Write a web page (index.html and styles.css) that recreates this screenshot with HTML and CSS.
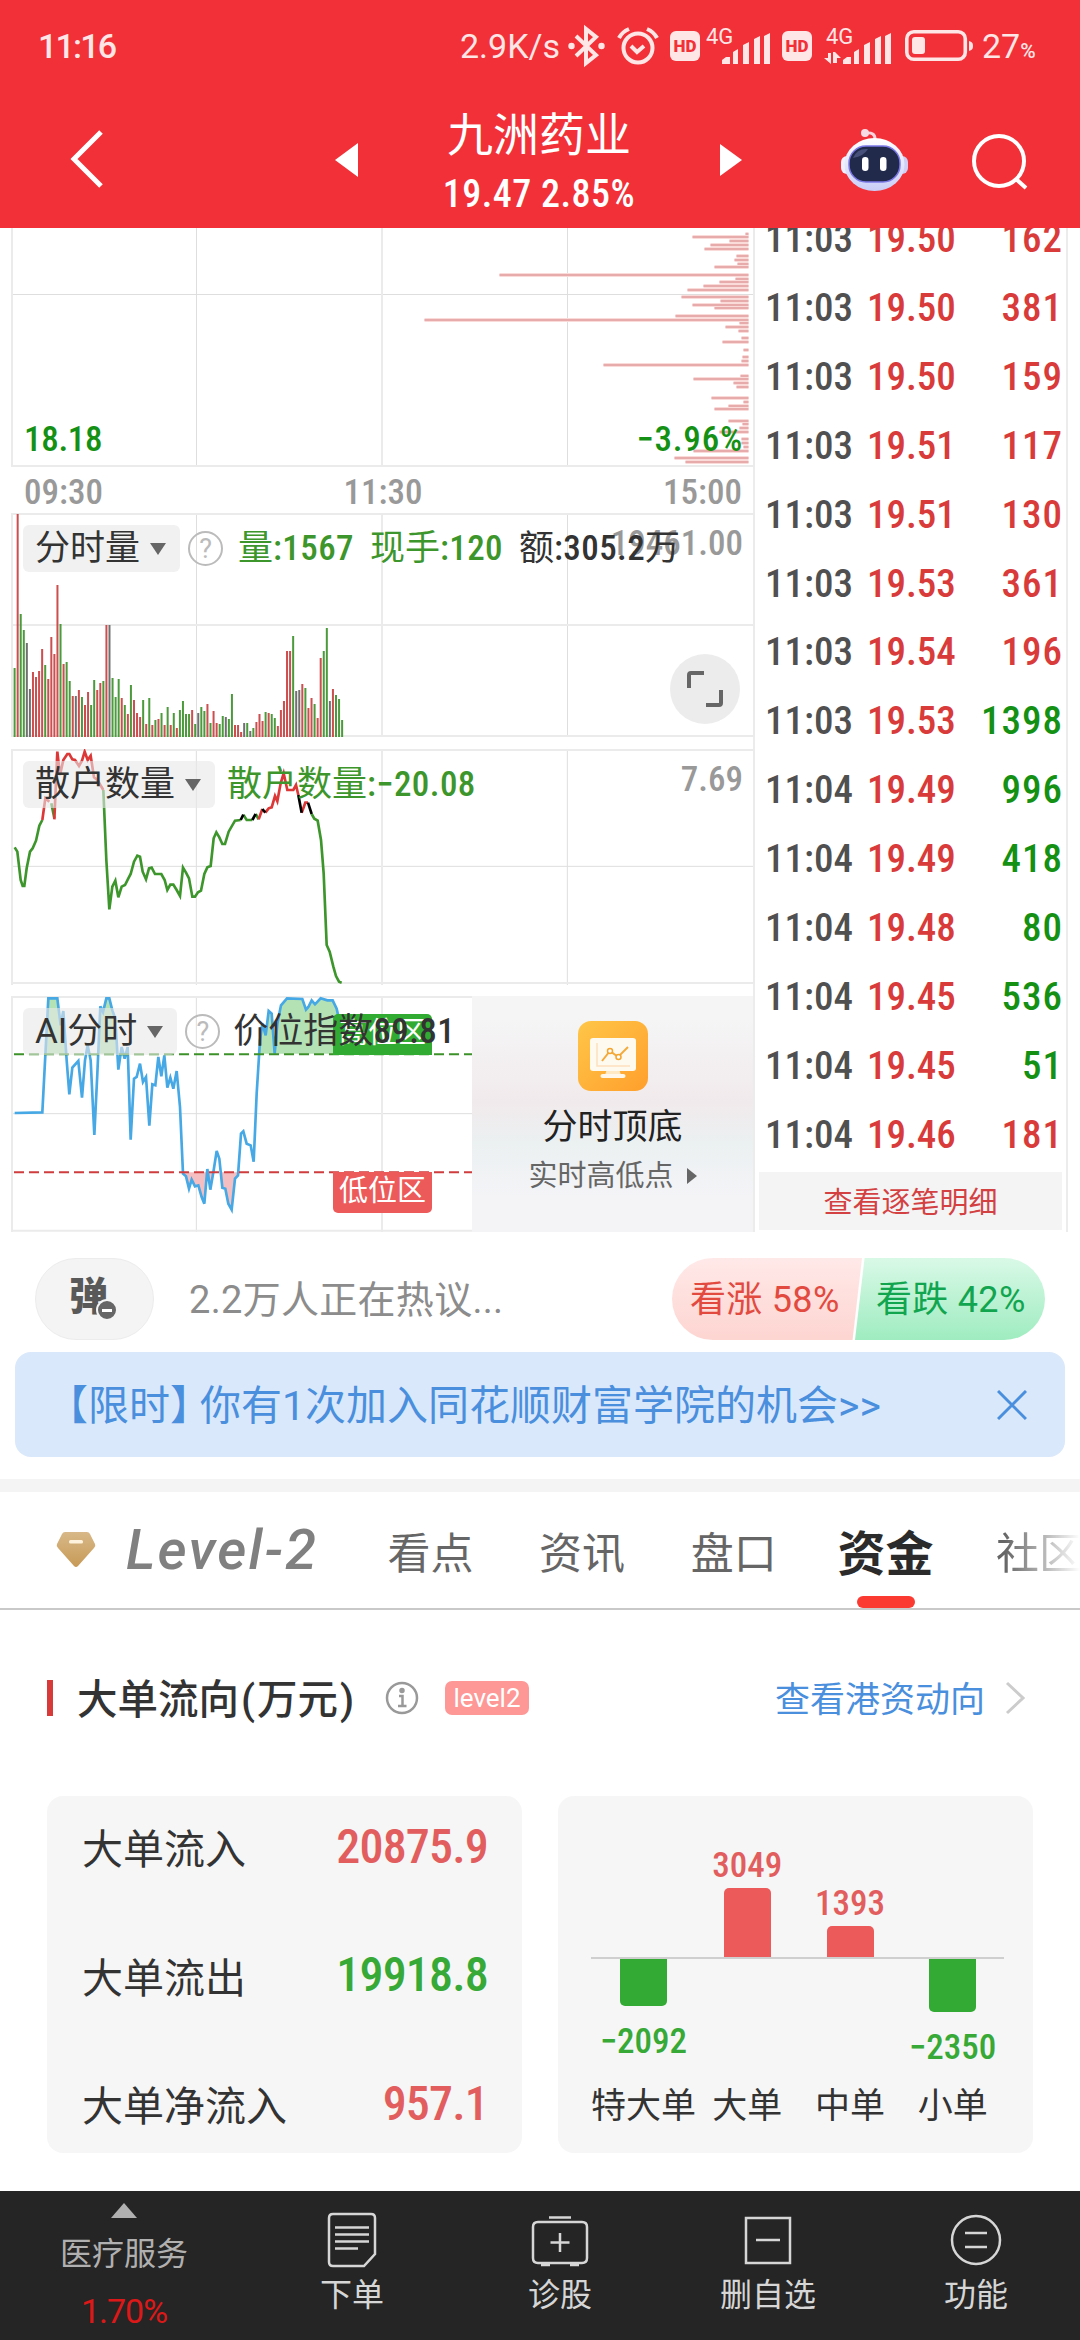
FILE: index.html
```html
<!DOCTYPE html>
<html lang="zh-CN">
<head>
  <meta charset="UTF-8">
  <meta name="viewport" content="width=device-width, initial-scale=1.0">
  <title>九洲药业</title>
  <link rel="stylesheet" href="styles.css">
</head>
<body>
  <header class="header">
    <div class="status">
      <span class="clock">11:16</span>
      <span class="speed">2.9K/s</span>
      <svg class="bluetooth" width="37" height="40" viewBox="0 0 37 40" fill="none" stroke="#ffe6e6" stroke-width="4">
        <path d="M8 10L28 29L18 37V3L28 11L8 30"/>
        <circle cx="3.5" cy="20" r="3.2" fill="#ffe6e6" stroke="none"/>
        <circle cx="33.5" cy="20" r="3.2" fill="#ffe6e6" stroke="none"/>
      </svg>
      <svg class="alarm" width="40" height="38" viewBox="0 0 40 38" fill="none" stroke="#ffe6e6" stroke-width="4">
        <circle cx="20" cy="21" r="14.5"/>
        <path d="M13 19l6 6 7-6M1 11Q4 5 11 2M39 11Q36 5 29 2"/>
      </svg>
      <span class="hd">HD</span>
      <svg class="signal" width="63" height="38" viewBox="0 0 63 38" fill="#ffe6e6">
        <text x="-1" y="17" class="net">4G</text>
        <path d="M15 37v-4l4-3h4v7zM26 37V25l5-3v15zM36 37V18l6-3v22zM47 37V12l6-3v28zM57 37V9l6-3v31z"/>
      </svg>
      <span class="hd hd-two">HD</span>
      <svg class="signal-two" width="67" height="38" viewBox="0 0 67 38" fill="#ffe6e6">
        <text x="2" y="17" class="net">4G</text>
        <path d="M0 31h4v-5h3v11zM9 25h2l6 6h-4v5H9z"/>
        <path d="M19 37v-4l4-3h4v7zM30 37V25l5-3v15zM40 37V18l6-3v22zM51 37V12l6-3v28zM61 37V9l6-3v31z"/>
      </svg>
      <svg class="battery" width="68" height="32" viewBox="0 0 68 32">
        <rect x="1.8" y="1.8" width="58.5" height="27.5" rx="7" fill="none" stroke="#ffe6e6" stroke-width="3.6"/>
        <rect x="7" y="7" width="13" height="17" rx="3" fill="#ffe6e6"/>
        <path d="M64 11c3 1 4 2 4 5s-1 4-4 5z" fill="#ffe6e6"/>
      </svg>
      <span class="percent">27<small>%</small></span>
    </div>
    <nav class="nav">
      <svg class="back" width="34" height="60" viewBox="0 0 34 60" fill="none" stroke="#fff" stroke-width="5"><path d="M31 3L4 30l27 27"/></svg>
      <svg class="prev" width="23" height="34" viewBox="0 0 23 34" fill="#fff"><path d="M23 0v34L0 17z"/></svg>
      <div class="stock">
        <h1>九洲药业</h1>
        <p class="num">19.47 2.85%</p>
      </div>
      <svg class="next" width="22" height="32" viewBox="0 0 22 32" fill="#fff"><path d="M0 0v32l22-16z"/></svg>
      <svg class="robot" width="67" height="62" viewBox="0 0 67 62">
        <defs>
          <linearGradient id="head" x1="0" y1="0" x2="0" y2="1"><stop offset="0" stop-color="#fff"/><stop offset="1" stop-color="#c9cdf7"/></linearGradient>
        </defs>
        <path d="M34 10Q34 3 25 4" fill="none" stroke="#fbd3dc" stroke-width="3"/>
        <circle cx="24" cy="4" r="4" fill="#f7dce6"/>
        <rect x="0" y="27" width="14" height="18" rx="6" fill="#eef0ff"/>
        <rect x="53" y="27" width="14" height="18" rx="6" fill="#cfcff5"/>
        <ellipse cx="33.500" cy="35.500" rx="30" ry="26.500" fill="url(#head)"/>
        <rect x="8" y="17" width="51" height="36" rx="17" fill="#222a4c" stroke="#7b78e6" stroke-width="1.500"/>
        <path d="M12 29q4-10 15-9q-4 7-15 9z" fill="#46507a"/>
        <rect x="21" y="28" width="6.500" height="14" rx="3.200" fill="#fff"/>
        <rect x="39" y="28" width="6.500" height="14" rx="3.200" fill="#fff"/>
      </svg>
      <svg class="search" width="56" height="56" viewBox="0 0 56 56" fill="none" stroke="#fff" stroke-width="4"><circle cx="27" cy="27" r="25"/><path d="M44 45l10 9"/></svg>
    </nav>
  </header>

  <main>
    <section class="quote">
      <div class="charts">
        <div class="panel price">
          <svg width="744" height="239" viewBox="0 0 744 239">
            <g class="grid"><path class="thin" d="M0 66.500H744M185.500 0V239M556.500 0V239"/><path d="M1 0V239M371 0V239M743 0V239M0 238H744"/></g>
            <g id="chips"></g>
          </svg>
          <span class="num low">18.18</span>
          <span class="num drop">−3.96%</span>
        </div>
        <div class="times num"><span>09:30</span><span class="noon">11:30</span><span>15:00</span></div>
        <div class="panel volume">
          <svg width="744" height="224" viewBox="0 0 744 224">
            <g class="grid"><path class="thin" d="M185.500 0V224M556.500 0V224"/><path d="M1 0V224M371 0V224M743 0V224M0 1H744M0 112H744M0 223H744"/></g>
            <g id="volume"></g>
          </svg>
          <span class="num max">19461.00</span>
          <div class="legend">
            <span class="chip">分时量<i></i></span>
            <span class="help">?</span>
            <span class="green">量<b>:1567</b></span>
            <span class="green">现手<b>:120</b></span>
            <span>额<b>:305.2</b>万</span>
          </div>
          <span class="expand">
            <svg width="36" height="36" viewBox="0 0 36 36" fill="none" stroke="#666" stroke-width="4"><path d="M2 17V4q0-2 2-2h13M34 19v13q0 2-2 2H19"/></svg>
          </span>
        </div>
        <div class="panel retail">
          <svg width="744" height="236" viewBox="33 27 2232 708">
            <g class="grid big"><path class="thin" d="M33 379H2265M589 27V735M1702 27V735"/><path d="M36 27V735M1146 27V735M2262 27V735M33 30H2265M33 729H2265"/></g>
            <g class="trend">
              <path class="down" d="M44 322L52 335L62 420L68 438H73L80 385L90 335L98 325L108 302L118 257L127 240M154 190L163 235M310 150L319 360L328 508L337 440L346 422L355 472L365 440L375 435L385 415L392 402L402 365L412 347L420 350L428 395L438 418L447 385L455 383L465 402H484L494 420L502 450L511 434H520L530 450L540 468L549 383L558 398L567 415L577 470H585L594 457L603 452L613 402L622 382L632 378L641 295L649 277L658 292L667 312H675L686 275L705 242L722 240M730 224L740 240H757M767 222L776 238M935 222L943 236L953 242L963 300L971 400L980 615L989 635L1000 680L1008 708L1017 725L1025 728"/>
              <path class="up" d="M127 240L136 175L148 185M163 238L172 35L180 105L190 60L202 42H208L217 58L225 60L237 78L246 62L254 35L263 60L272 47L282 112L292 120L310 150M776 238L787 207M796 218L806 205L815 202L825 168L832 184L842 130L851 100L862 150H880L888 135L895 165M905 218L916 188H924"/>
              <path class="flat" d="M722 240L730 224M757 240L767 222M787 207L796 218M895 165L905 218M924 188L935 222"/>
            </g>
          </svg>
          <span class="num max">7.69</span>
          <div class="legend">
            <span class="chip">散户数量<i></i></span>
            <span class="green">散户数量<b>:−20.08</b></span>
          </div>
        </div>
        <div class="panel ai">
          <svg width="461" height="236" viewBox="33 767 1383 708">
            <defs>
              <clipPath id="high"><rect x="33" y="767" width="1383" height="173"/></clipPath>
              <clipPath id="bottom"><rect x="33" y="1296" width="1383" height="179"/></clipPath>
            </defs>
            <g class="grid big"><path class="thin" d="M33 1120H1416M589 767V1475"/><path d="M36 767V1475M1146 767V1475M33 770H1416M33 1471H1416"/></g>
            <path id="aiHigh" clip-path="url(#high)" fill="#b4e2b4"/>
            <path id="aiLow" clip-path="url(#bottom)" fill="#f5bfc2"/>
            <path id="aiLine" fill="none" stroke="#46a8e4" stroke-width="8"/>
            <path d="M42 942H1416" stroke="#3c9129" stroke-width="6" stroke-dasharray="30 15"/>
            <path d="M42 1296H1416" stroke="#cf3d3f" stroke-width="6" stroke-dasharray="30 15"/>
          </svg>
          <span class="zone zone-high">高位区</span>
          <span class="zone zone-low">低位区</span>
          <div class="legend">
            <span class="chip">AI分时<i></i></span>
            <span class="help">?</span>
            <span class="index">价位指数<b>89.81</b></span>
          </div>
          <div class="promo">
            <svg width="70" height="70" viewBox="0 0 70 70">
              <defs><linearGradient id="gold" x1="0" y1="0" x2="1" y2="1"><stop offset="0" stop-color="#ffc648"/><stop offset="1" stop-color="#ff9f2c"/></linearGradient></defs>
              <rect width="70" height="70" rx="13" fill="url(#gold)"/>
              <path d="M29 48h12l2 6H27z" fill="#ffe9c5"/>
              <rect x="12" y="17" width="46" height="33" rx="3" fill="#fffaf0"/>
              <rect x="22.500" y="53" width="25" height="4" rx="2" fill="#fff8ea"/>
              <path d="M19 22v23h33" fill="none" stroke="#fde0bd" stroke-width="1.500"/>
              <path d="M24 40l8-10 8 6 10-10" fill="none" stroke="#f4ab3d" stroke-width="2"/>
              <circle cx="32" cy="30" r="2.500" fill="#fff" stroke="#f4a52f" stroke-width="1.500"/>
              <circle cx="40.500" cy="36" r="2.500" fill="#fff" stroke="#f4a52f" stroke-width="1.500"/>
            </svg>
            <strong>分时顶底</strong>
            <span>实时高低点<i></i></span>
          </div>
        </div>
      </div>
      <div class="ticks">
        <ul id="ticks" class="num"></ul>
        <a class="more">查看逐笔明细</a>
      </div>
    </section>

    <section class="talk">
      <span class="danmu">弹<i></i></span>
      <span class="hot">2.2万人正在热议...</span>
      <div class="vote"><span class="bull">看涨 58%</span><span class="bear">看跌 42%</span></div>
    </section>

    <section class="notice">
      <p>【限时<span>】</span>你有1次加入同花顺财富学院的机会&gt;&gt;</p>
      <svg width="30" height="30" viewBox="0 0 30 30" stroke="#4a8fdd" stroke-width="3"><path d="M1 1l28 28M29 1L1 29"/></svg>
    </section>

    <nav class="tabs">
      <svg width="40" height="36" viewBox="0 0 40 36"><defs><linearGradient id="gem" x1="0" y1="0" x2="0" y2="1"><stop offset="0" stop-color="#d8b888"/><stop offset="1" stop-color="#c79a56"/></linearGradient></defs><path d="M9 0h22q2 0 3 2l5 10q1 2-1 4L22 34q-2 2-4 0L2 16q-2-2-1-4L6 2q1-2 3-2z" fill="url(#gem)"/><rect x="13" y="8" width="14" height="3.500" rx="1.500" fill="#fff2dc"/></svg>
      <span class="level">Level-2</span>
      <span>看点</span>
      <span>资讯</span>
      <span>盘口</span>
      <span class="active">资金</span>
      <span class="fade">社区</span>
    </nav>

    <section class="flow">
      <div class="flow-title">
        <h2>大单流向<span>(</span>万元<span>)</span></h2>
        <svg width="34" height="34" viewBox="0 0 34 34" fill="none" stroke="#999" stroke-width="2.500"><circle cx="17" cy="17" r="15"/><path d="M14 15h3.500v10M13 25h8.500"/><circle cx="17" cy="9.500" r="1.500" fill="#999"/></svg>
        <span class="badge">level2</span>
        <a>查看港资动向</a>
        <svg width="20" height="34" viewBox="0 0 20 34" fill="none" stroke="#ccc" stroke-width="3"><path d="M2 2l16 15L2 32"/></svg>
      </div>
      <div class="cards">
        <div class="card totals">
          <div><span>大单流入</span><b class="num rise">20875.9</b></div>
          <div><span>大单流出</span><b class="num fall">19918.8</b></div>
          <div><span>大单净流入</span><b class="num rise">957.1</b></div>
        </div>
        <div class="card bars" id="bars"></div>
      </div>
    </section>
  </main>

  <footer class="bottom">
    <div class="sector"><i></i><span>医疗服务</span><em>1.70%</em></div>
    <div>
      <svg width="56" height="56" viewBox="0 0 56 56"><path d="M9 2h38q4 0 4 4v36l-11 12H9q-4 0-4-4V6q0-4 4-4zM11 15.500h34M11 22.500h34M11 29.500h34M11 36.500h23"/></svg>
      <span>下单</span>
    </div>
    <div>
      <svg width="60" height="56" viewBox="0 0 60 56"><path d="M8 10h44q5 0 5 5v31q0 5-5 5H8q-5 0-5-5V15q0-5 5-5zM19 5.500h22M30 21v19M20.500 30.500h19M11 53h9M40 53h9"/></svg>
      <span>诊股</span>
    </div>
    <div>
      <svg width="56" height="56" viewBox="0 0 56 56"><path d="M6 6h44v45H6zM16 28h24"/></svg>
      <span>删自选</span>
    </div>
    <div>
      <svg width="56" height="56" viewBox="0 0 56 56"><circle cx="28" cy="28" r="24"/><path d="M17 21h22M17 35h22"/></svg>
      <span>功能</span>
    </div>
  </footer>
  <script src="script.js"></script>
</body>
</html>
```

FILE: styles.css
```css
* {
  box-sizing: border-box;
  margin: 0;
  padding: 0;
}

body {
  width: 1080px;
  height: 2340px;
  overflow: hidden;
  display: flex;
  flex-direction: column;
  background-color: #fff;
  color: #333;
  font-family: Roboto, "Noto Sans CJK SC", sans-serif;
}

svg {
  display: block;
  flex: none;
}

.num,
.legend b {
  font-family: "Roboto Condensed", Roboto, sans-serif;
  font-weight: 500;
  white-space: pre;
}

/* header */
.header {
  height: 228px;
  background-color: #f13038;
  color: #fff;
}

.status {
  display: flex;
  align-items: center;
  height: 91px;
  padding: 0 0 0 38px;
  color: #ffe6e6;
  font-size: 34px;
  white-space: nowrap;
}

.status svg {
  overflow: visible;
}

.clock {
  width: 422px;
  font-weight: 500;
  letter-spacing: -1.8px;
}

.speed {
  width: 108px;
}

.alarm {
  margin-left: 13px;
}

.hd {
  width: 30px;
  height: 30px;
  margin-left: 12px;
  border-radius: 6px;
  background-color: #ffe6e6;
  color: #f13038;
  font-size: 17px;
  font-weight: 900;
  line-height: 30px;
  text-align: center;
}

.signal {
  margin-left: 7px;
}

.signal-two {
  margin-left: 12px;
}

.net {
  font-size: 22px;
}

.battery {
  margin: 0 9px 0 14px;
}

.percent small {
  font-size: 21px;
  font-weight: 500;
}

.nav {
  display: flex;
  align-items: center;
  height: 137px;
  padding: 0 52px 0 70px;
}

.back {
  margin-top: -1px;
}

.prev {
  margin-left: 231px;
}

.stock {
  flex: 1;
  padding-top: 8px;
  text-align: center;
}

.stock h1 {
  font-size: 46px;
  font-weight: 400;
  line-height: 60px;
}

.stock p {
  margin-top: 1px;
  font-size: 38px;
  line-height: 56px;
  letter-spacing: .5px;
}

.robot {
  margin-left: 99px;
}

.search {
  margin: 5px 0 0 64px;
}

/* charts */
.quote {
  display: flex;
  height: 1004px;
  padding-left: 11px;
}

.charts {
  width: 742px;
}

.panel {
  position: relative;
}

.grid path {
  fill: none;
  stroke: #ebebeb;
  stroke-width: 2;
}

.grid .thin {
  stroke: #dedede;
  stroke-width: 1;
}

.big path {
  stroke-width: 6;
}

.big .thin {
  stroke-width: 3;
}

.price {
  height: 239px;
}

.low,
.drop {
  position: absolute;
  bottom: 7px;
  color: #149114;
  font-size: 35px;
}

.low {
  left: 13px;
  letter-spacing: -.3px;
}

.drop {
  right: 10px;
  letter-spacing: .8px;
}

.times {
  display: flex;
  justify-content: space-between;
  height: 46px;
  padding: 0 11px 0 13px;
  color: #999;
  font-size: 35px;
  line-height: 51px;
}

.max {
  position: absolute;
  top: 10px;
  right: 10px;
  color: #999;
  font-size: 35px;
}

.volume {
  height: 224px;
}

.retail {
  height: 236px;
  margin: 12px 0 11px;
}

.ai {
  height: 236px;
}

.legend {
  position: absolute;
  top: 12px;
  left: 12px;
  display: flex;
  align-items: center;
  height: 47px;
  color: #333;
  font-size: 35px;
  line-height: 47px;
  white-space: nowrap;
}

.legend > * {
  margin-right: 16px;
}

.legend b {
  letter-spacing: .4px;
}

.chip {
  display: flex;
  align-items: center;
  padding: 0 14px 0 12px;
  border-radius: 6px;
  background-color: rgba(232, 232, 232, .6);
}

.legend .chip {
  margin-right: 12px;
}

.legend .chip:has(+ .help) {
  margin-right: 8px;
}

.legend .help {
  margin-right: 15px;
}

.legend .index {
  margin-left: -2px;
}

.chip i {
  margin-left: 10px;
  border: 8px solid transparent;
  border-top: 12px solid #666;
  border-bottom: 0;
}

.help {
  width: 35px;
  height: 35px;
  border: 2px solid #bbb;
  border-radius: 50%;
  color: #bbb;
  font-size: 27px;
  line-height: 32px;
  text-align: center;
}

.green {
  color: #3d962b;
}

.expand {
  position: absolute;
  top: 141px;
  left: 659px;
  width: 70px;
  height: 70px;
  padding: 17px;
  border-radius: 50%;
  background-color: #ececec;
}

.trend path {
  fill: none;
  stroke-width: 8;
}

.trend .up {
  stroke: #dc3837;
}

.trend .down {
  stroke: #3d962b;
}

.trend .flat {
  stroke: #000;
}

.zone {
  position: absolute;
  left: 322px;
  width: 99px;
  height: 41px;
  border-radius: 5px 5px 0 0;
  background-color: #31ab31;
  color: #fff;
  font-size: 29px;
  line-height: 38px;
  text-align: center;
}

.zone-high {
  top: 18px;
}

.zone-low {
  top: 176px;
  border-radius: 0 0 5px 5px;
  background-color: #ec5a5a;
}

.promo {
  position: absolute;
  top: 0;
  right: 0;
  display: flex;
  flex-direction: column;
  align-items: center;
  width: 281px;
  height: 236px;
  padding-top: 25px;
  background: linear-gradient(#f5f5f6 10%, #f1eaec 45%, #ebf0f1 62%, #f4f4f7 85%);
}

.promo strong {
  margin-top: 12px;
  color: #222;
  font-size: 35px;
  font-weight: 400;
  line-height: 50px;
}

.promo span {
  display: flex;
  align-items: center;
  color: #666;
  font-size: 29px;
  line-height: 46px;
}

.promo span i {
  margin-left: 13px;
  border: 8px solid transparent;
  border-left: 10px solid #666;
  border-right: 0;
}

/* trade list */
.ticks {
  display: flex;
  flex-direction: column;
  width: 315px;
  border: solid #ececec;
  border-width: 0 2px;
}

.ticks ul {
  height: 944px;
  padding: 0 3px 0 10px;
  overflow: hidden;
  list-style: none;
  font-size: 39px;
}

.ticks ul::before {
  content: "";
  display: block;
  margin-top: -23px;
}

.ticks li {
  display: grid;
  grid-template-columns: 102px 1fr auto;
  height: 68.92px;
  line-height: 69px;
  color: #d93a3a;
}

.ticks time {
  color: #505050;
}

.ticks li :last-child {
  letter-spacing: 1px;
}

.ticks .sell {
  color: #149114;
}

.more {
  margin: 0 4px;
  height: 58px;
  background-color: #f4f4f4;
  color: #d34143;
  font-size: 29px;
  line-height: 62px;
  text-align: center;
}

/* comments */
.talk {
  display: flex;
  align-items: center;
  height: 82px;
  margin: 26px 35px 12px;
}

.danmu {
  position: relative;
  width: 119px;
  height: 82px;
  border: 1px solid #ececec;
  border-radius: 41px;
  background-color: #f4f4f4;
  color: #595959;
  font-size: 39px;
  font-weight: 900;
  line-height: 76px;
  padding-left: 33px;
}

.danmu i {
  position: absolute;
  left: 60px;
  top: 40px;
  width: 22px;
  height: 22px;
  border: 2px solid #f4f4f4;
  border-radius: 50%;
  background: linear-gradient(#fff, #fff) center / 10px 3px no-repeat #666;
}

.hot {
  flex: 1;
  margin-top: -5px;
  padding-left: 35px;
  color: #8c8c8c;
  font-size: 38px;
  letter-spacing: .3px;
}

.vote {
  display: flex;
  width: 373px;
  height: 82px;
  overflow: hidden;
  border-radius: 41px;
  font-size: 36px;
  line-height: 84px;
  letter-spacing: .3px;
  white-space: nowrap;
}

.bull,
.bear {
  flex: none;
}

.bull {
  width: 190px;
  padding-left: 18px;
  background: linear-gradient(#ffe9e8, #fdd5d1);
  color: #e2493f;
  clip-path: polygon(0 0, 100% 0, 95% 100%, 0 100%);
}

.bear {
  width: 192px;
  margin-left: -7px;
  padding-left: 21px;
  background: linear-gradient(#d9f9e7, #9fecc0);
  color: #12a550;
  clip-path: polygon(5% 0, 100% 0, 100% 100%, 0 100%);
}

.notice {
  display: flex;
  align-items: center;
  justify-content: space-between;
  height: 105px;
  margin: 0 15px 22px;
  padding: 0 38px 0 32px;
  border-radius: 16px;
  background-color: #dae8fb;
  color: #4a8fdd;
  font-size: 41px;
  white-space: nowrap;
}

.notice p {
  margin-top: -5px;
}

.notice span {
  letter-spacing: -11px;
}

/* tabs */
.tabs {
  display: flex;
  align-items: center;
  height: 131px;
  padding-left: 56px;
  border-top: 13px solid #f4f4f4;
  border-bottom: 2px solid #c9c9c9;
  color: #666;
  font-size: 43px;
  white-space: nowrap;
}

.tabs > span {
  width: 152px;
}

.tabs .level {
  width: 292px;
  padding-left: 30px;
  color: #808080;
  font-size: 56px;
  font-style: italic;
  font-weight: 500;
  letter-spacing: 2.2px;
}

.tabs .active {
  position: relative;
  width: 159px;
  margin-left: -5px;
  color: #2b2b2b;
  font-size: 48px;
  font-weight: 700;
}

.active::after {
  content: "";
  position: absolute;
  left: 20px;
  bottom: -23px;
  width: 58px;
  height: 12px;
  border-radius: 6px;
  background-color: #fb3a32;
}

.tabs .fade {
  width: 84px;
  -webkit-mask-image: linear-gradient(90deg, #000 10%, transparent);
  mask-image: linear-gradient(90deg, #000 10%, transparent);
}

/* money flow */
.flow {
  padding: 70px 47px 0;
}

.flow-title {
  display: flex;
  align-items: center;
  height: 36px;
  border-left: 6px solid #d83a3a;
  padding: 0 8px 0 24px;
}

.flow-title h2 {
  width: 308px;
  margin-top: -4px;
  font-size: 40.5px;
  font-weight: 500;
  white-space: nowrap;
}

.flow-title h2 span {
  padding: 0 2px;
}

.badge {
  width: 84px;
  height: 34px;
  margin-left: 26px;
  border-radius: 7px;
  background-color: #fd9896;
  color: #fff;
  font-size: 26px;
  line-height: 34px;
  text-align: center;
}

.flow-title a {
  margin: -3px 20px 0 auto;
  color: #4a8fdd;
  font-size: 35px;
}

.cards {
  display: grid;
  grid-template-columns: 475px 475px;
  gap: 36px;
  margin-top: 80px;
}

.card {
  height: 357px;
  border-radius: 16px;
  background-color: #f6f6f6;
}

.totals {
  display: flex;
  flex-direction: column;
  justify-content: space-between;
  padding: 15px 34px 15px 35px;
}

.totals div {
  display: flex;
  align-items: center;
  justify-content: space-between;
  height: 70px;
  font-size: 41px;
}

.totals b {
  font-size: 48px;
  letter-spacing: -.8px;
}

.bars {
  display: grid;
  grid-template-columns: repeat(4, 1fr);
  padding: 0 29px 0 33px;
  background-image: linear-gradient(#cfcfcf, #cfcfcf);
  background-size: 413px 2px;
  background-position: 33px 161px;
  background-repeat: no-repeat;
}

.rise {
  color: #e25d5d;
}

.fall {
  color: #36a936;
}

.bar {
  display: flex;
  flex-direction: column;
  align-items: center;
  white-space: nowrap;
}

.bar .above {
  display: flex;
  flex-direction: column;
  align-items: center;
  justify-content: flex-end;
  height: 161px;
}

.bar .below {
  display: flex;
  flex-direction: column;
  align-items: center;
  height: 126px;
  padding-top: 2px;
}

.bar b {
  font-size: 35px;
  line-height: 44px;
}

.bar i {
  width: 47px;
  background-color: #ec5a5a;
  border-radius: 5px 5px 0 0;
}

.below i {
  margin-bottom: 14px;
  border-radius: 0 0 5px 5px;
  background-color: #33aa33;
}

.bar span {
  font-size: 35px;
  line-height: 48px;
}

/* bottom bar */
.bottom {
  display: grid;
  grid-template-columns: 248px repeat(4, 208px);
  height: 149px;
  margin-top: auto;
  background-color: #252525;
  color: #d6d6d6;
  font-size: 32px;
}

.bottom div {
  display: flex;
  flex-direction: column;
  align-items: center;
  padding-top: 21px;
}

.bottom svg {
  fill: none;
  stroke: #d6d6d6;
  stroke-width: 2.500;
}

.bottom span {
  line-height: 55px;
}

.bottom .sector {
  padding-top: 12px;
  color: #b0b0b0;
}

.sector i {
  border: 13px solid transparent;
  border-bottom: 15px solid #b0b0b0;
  border-top: 0;
}

.sector span {
  margin-top: 9px;
}

.sector em {
  margin-top: 8px;
  color: #dc1818;
  font-size: 34px;
  font-style: normal;
  line-height: 42px;
  letter-spacing: -1px;
}
```

FILE: script.js
```js
// chips by price level: [y, width]
const chips = [
  [6, 3], [9, 56], [13, 19], [17, 38], [21, 44], [28, 12], [32, 14], [36, 11], [39, 34], [47, 249],
  [51, 13], [54, 29], [58, 45], [62, 61], [69, 67], [73, 28], [77, 56], [80, 34], [88, 73], [92, 324],
  [95, 9], [99, 23], [103, 10], [110, 7], [114, 26], [122, 5], [129, 6], [133, 7], [137, 145], [148, 8],
  [151, 55], [155, 15], [159, 12], [170, 37], [174, 5], [178, 20], [181, 34], [193, 20], [196, 6], [200, 9],
  [204, 29], [211, 7], [215, 7], [219, 5], [223, 55], [230, 74], [234, 63]
];
document.getElementById('chips').innerHTML =
  chips.map(([y, w]) => `<rect x="${737.5 - w}" y="${y - 2}" width="${w}" height="4" fill="#fbdada"/>`).join('') +
  chips.map(([y, w]) => `<rect x="${737.5 - w}" y="${y - 1}" width="${w}" height="2" fill="#e8abab"/>`).join('');

// minute volume: r = up, g = down, k = unchanged
const volume = 'g69 r223 g123 g107 k94 k48 r65 r60 r66 r88 g72 r58 r100 r83 r152 g113 r73 g75 g56 r41 k41 r47 g40 r32 r45 g32 g57 r47 r54 g56 r112 k112 g59 g40 g58 r39 g32 r23 g52 r37 r24 r20 g37 r13 g39 r12 g17 r18 g24 r12 g30 r12 g24 r9 g27 g36 g23 g23 r27 g13 k24 g30 g26 r33 g14 r26 r14 g13 g21 k20 g18 g43 r12 r12 r5 k14 g14 k6 g9 r15 r23 r16 g25 r24 g23 g19 r11 r27 r36 r86 r86 g101 k46 k47 r53 g49 r29 r39 g33 r19 r79 g86 g109 k36 r48 g42 g38 g17';
const volumeColors = { r: '#cc4e4e', g: '#4b9a3c', k: '#707070' };
document.getElementById('volume').innerHTML = volume.split(' ').map((v, i) => {
  const h = Number(v.slice(1));
  return `<rect x="${(2.6 + i * 3.061).toFixed(2)}" y="${224 - h}" width="2" height="${h}" fill="${volumeColors[v[0]]}"/>`;
}).join('');

// AI price position index
const ai = '44,1118 127,1116 145,774 172,774 182,855 190,812 200,960 208,1062 217,982 235,962 246,1072 255,960 263,915 272,960 283,1184 292,1000 301,798 309,815 319,774 328,774 337,810 346,835 355,988 365,920 374,955 383,920 392,1198 402,1015 410,1010 420,970 429,1025 438,1010 448,1156 457,1032 466,1035 475,950 484,1008 493,945 502,1042 511,1012 520,1045 530,992 540,1100 549,1300 558,1308 567,1345 575,1318 585,1338 595,1335 605,1370 613,1390 622,1286 631,1348 641,1290 650,1232 658,1255 667,1342 676,1345 685,1390 695,1408 705,1315 714,1305 723,1180 730,1173 740,1210 752,1215 761,1264 770,1060 780,900 787,850 797,885 806,812 815,820 824,940 832,850 843,795 861,774 907,776 918,808 925,800 935,780 945,792 962,774 982,780 998,780 1010,805 1020,850 1026,880';
document.getElementById('aiLine').setAttribute('d', `M${ai}`);
document.getElementById('aiHigh').setAttribute('d', `M${ai} 1026,942 44,942z`);
document.getElementById('aiLow').setAttribute('d', `M${ai} 1026,1294 44,1294z`);

const ticks = [
  ['11:03', '19.50', 162], ['11:03', '19.50', 381], ['11:03', '19.50', 159], ['11:03', '19.51', 117],
  ['11:03', '19.51', 130], ['11:03', '19.53', 361], ['11:03', '19.54', 196], ['11:03', '19.53', 1398, 'sell'],
  ['11:04', '19.49', 996, 'sell'], ['11:04', '19.49', 418, 'sell'], ['11:04', '19.48', 80, 'sell'],
  ['11:04', '19.45', 536, 'sell'], ['11:04', '19.45', 51, 'sell'], ['11:04', '19.46', 181]
];
document.getElementById('ticks').innerHTML = ticks.map(([time, price, amount, side]) =>
  `<li><time>${time}</time><span>${price}</span><span class="${side || 'buy'}">${amount}</span></li>`).join('');

// net flow by order size: [name, value, bar height]
const flows = [['特大单', -2092, 47], ['大单', 3049, 69], ['中单', 1393, 31], ['小单', -2350, 53]];
document.getElementById('bars').innerHTML = flows.map(([name, value, h]) => {
  const bar = `<i style="height: ${h}px"></i>`;
  const up = value > 0 ? `<b class="num rise">${value}</b>${bar}` : '';
  const down = value < 0 ? `${bar}<b class="num fall">−${-value}</b>` : '';
  return `<div class="bar"><div class="above">${up}</div><div class="below">${down}</div><span>${name}</span></div>`;
}).join('');
```
